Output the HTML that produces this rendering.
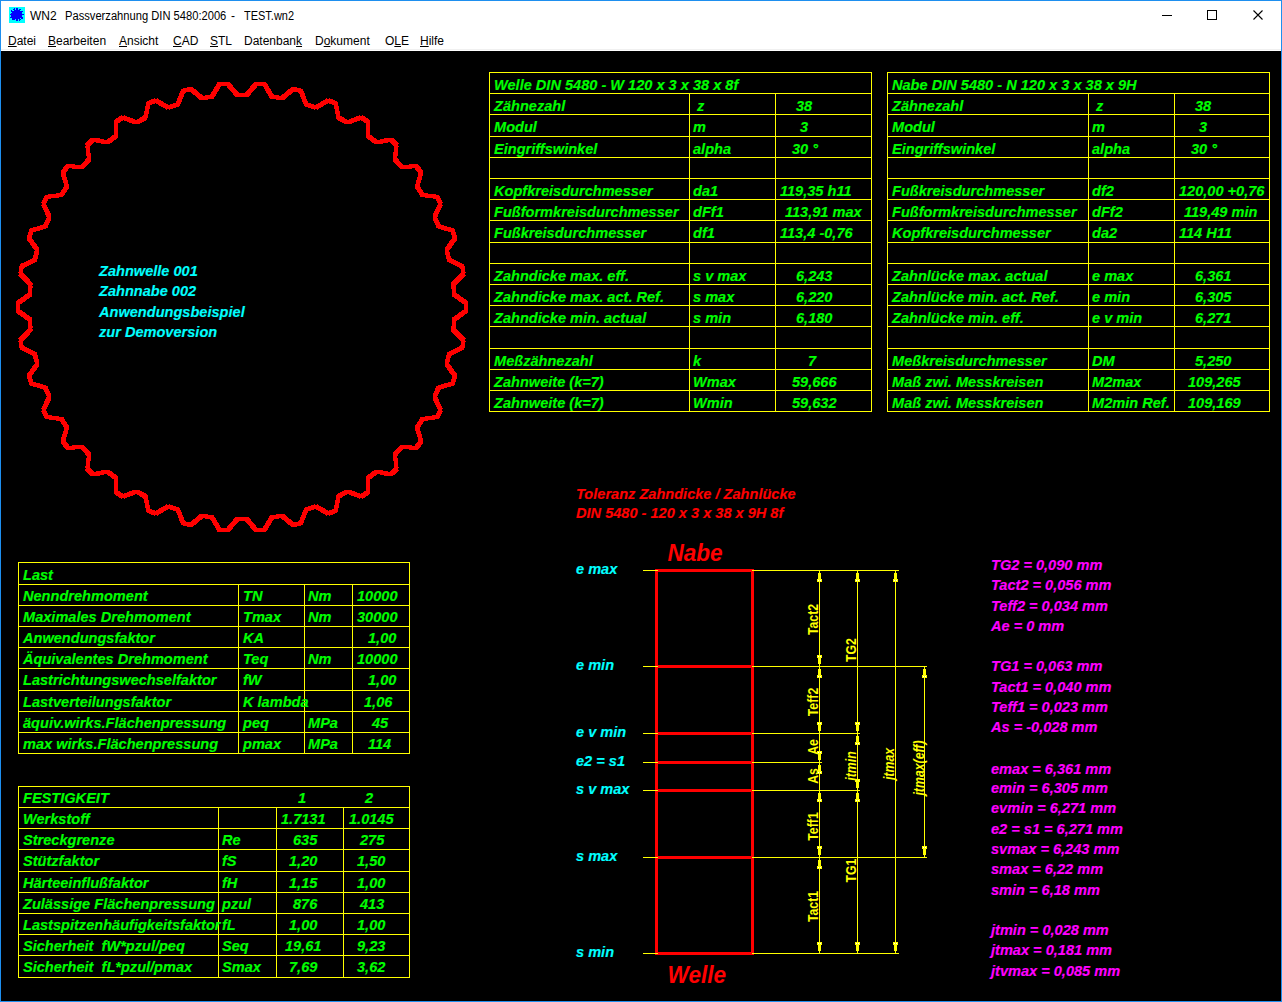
<!DOCTYPE html>
<html><head><meta charset="utf-8">
<style>
html,body{margin:0;padding:0;background:#000;}
body{width:1282px;height:1002px;overflow:hidden;position:relative;font-family:"Liberation Sans",sans-serif;}
#top{position:absolute;left:0;top:0;width:1282px;height:51px;background:#fff;}
#sep{position:absolute;left:0;top:49px;width:1282px;height:1px;background:#f0f0f0;}
.tt{position:absolute;top:9px;font-size:12px;line-height:14px;color:#000;white-space:pre;}
.mi{position:absolute;top:34px;font-size:12px;line-height:14px;color:#000;white-space:pre;}
.mi u{text-decoration:underline;text-underline-offset:1px;}
#cv{position:absolute;left:0;top:0;}
#cv text{font-family:"Liberation Sans",sans-serif;white-space:pre;}
.t{stroke-width:0.15px;font-size:15.5px;font-weight:bold;font-style:italic;}
.big{stroke-width:0px;font-size:24px;font-weight:bold;font-style:italic;}
.rot{font-size:15px;font-weight:bold;}
.it{font-style:italic;}
#border{position:absolute;left:0;top:0;width:1280px;height:1000px;border:1px solid #1e8fef;pointer-events:none;}
</style></head><body>
<div id="top"></div><div id="sep"></div>
<svg id="cv" width="1282" height="1002" viewBox="0 0 1282 1002" shape-rendering="crispEdges">
<rect x="489" y="72" width="383" height="1" fill="#ffff00"/>
<rect x="489" y="93" width="383" height="1" fill="#ffff00"/>
<rect x="489" y="114" width="383" height="1" fill="#ffff00"/>
<rect x="489" y="136" width="383" height="1" fill="#ffff00"/>
<rect x="489" y="157" width="383" height="1" fill="#ffff00"/>
<rect x="489" y="178" width="383" height="1" fill="#ffff00"/>
<rect x="489" y="199" width="383" height="1" fill="#ffff00"/>
<rect x="489" y="220" width="383" height="1" fill="#ffff00"/>
<rect x="489" y="242" width="383" height="1" fill="#ffff00"/>
<rect x="489" y="263" width="383" height="1" fill="#ffff00"/>
<rect x="489" y="284" width="383" height="1" fill="#ffff00"/>
<rect x="489" y="305" width="383" height="1" fill="#ffff00"/>
<rect x="489" y="326" width="383" height="1" fill="#ffff00"/>
<rect x="489" y="348" width="383" height="1" fill="#ffff00"/>
<rect x="489" y="369" width="383" height="1" fill="#ffff00"/>
<rect x="489" y="390" width="383" height="1" fill="#ffff00"/>
<rect x="489" y="411" width="383" height="1" fill="#ffff00"/>
<rect x="489" y="72" width="1" height="340" fill="#ffff00"/>
<rect x="871" y="72" width="1" height="340" fill="#ffff00"/>
<rect x="689" y="93" width="1" height="319" fill="#ffff00"/>
<rect x="775" y="93" width="1" height="319" fill="#ffff00"/>
<text class="t" fill="#00ff00" stroke="#00ff00" transform="translate(494,89.5) scale(0.941,1)">Welle DIN 5480 - W 120 x 3 x 38 x 8f</text>
<text class="t" fill="#00ff00" stroke="#00ff00" transform="translate(494,110.5) scale(0.941,1)">Zähnezahl</text>
<text class="t" fill="#00ff00" stroke="#00ff00" transform="translate(697,110.5) scale(0.941,1)">z</text>
<text class="t" fill="#00ff00" stroke="#00ff00" transform="translate(796,110.5) scale(0.941,1)">38</text>
<text class="t" fill="#00ff00" stroke="#00ff00" transform="translate(494,131.5) scale(0.941,1)">Modul</text>
<text class="t" fill="#00ff00" stroke="#00ff00" transform="translate(693,131.5) scale(0.941,1)">m</text>
<text class="t" fill="#00ff00" stroke="#00ff00" transform="translate(800,131.5) scale(0.941,1)">3</text>
<text class="t" fill="#00ff00" stroke="#00ff00" transform="translate(494,153.5) scale(0.941,1)">Eingriffswinkel</text>
<text class="t" fill="#00ff00" stroke="#00ff00" transform="translate(693,153.5) scale(0.941,1)">alpha</text>
<text class="t" fill="#00ff00" stroke="#00ff00" transform="translate(792,153.5) scale(0.941,1)">30 °</text>
<text class="t" fill="#00ff00" stroke="#00ff00" transform="translate(494,195.5) scale(0.941,1)">Kopfkreisdurchmesser</text>
<text class="t" fill="#00ff00" stroke="#00ff00" transform="translate(693,195.5) scale(0.941,1)">da1</text>
<text class="t" fill="#00ff00" stroke="#00ff00" transform="translate(780,195.5) scale(0.941,1)">119,35 h11</text>
<text class="t" fill="#00ff00" stroke="#00ff00" transform="translate(494,216.5) scale(0.941,1)">Fußformkreisdurchmesser</text>
<text class="t" fill="#00ff00" stroke="#00ff00" transform="translate(693,216.5) scale(0.941,1)">dFf1</text>
<text class="t" fill="#00ff00" stroke="#00ff00" transform="translate(785,216.5) scale(0.941,1)">113,91 max</text>
<text class="t" fill="#00ff00" stroke="#00ff00" transform="translate(494,237.5) scale(0.941,1)">Fußkreisdurchmesser</text>
<text class="t" fill="#00ff00" stroke="#00ff00" transform="translate(693,237.5) scale(0.941,1)">df1</text>
<text class="t" fill="#00ff00" stroke="#00ff00" transform="translate(780,237.5) scale(0.941,1)">113,4 -0,76</text>
<text class="t" fill="#00ff00" stroke="#00ff00" transform="translate(494,280.5) scale(0.941,1)">Zahndicke max. eff.</text>
<text class="t" fill="#00ff00" stroke="#00ff00" transform="translate(693,280.5) scale(0.941,1)">s v max</text>
<text class="t" fill="#00ff00" stroke="#00ff00" transform="translate(796,280.5) scale(0.941,1)">6,243</text>
<text class="t" fill="#00ff00" stroke="#00ff00" transform="translate(494,301.5) scale(0.941,1)">Zahndicke max. act. Ref.</text>
<text class="t" fill="#00ff00" stroke="#00ff00" transform="translate(693,301.5) scale(0.941,1)">s max</text>
<text class="t" fill="#00ff00" stroke="#00ff00" transform="translate(796,301.5) scale(0.941,1)">6,220</text>
<text class="t" fill="#00ff00" stroke="#00ff00" transform="translate(494,322.5) scale(0.941,1)">Zahndicke min. actual</text>
<text class="t" fill="#00ff00" stroke="#00ff00" transform="translate(693,322.5) scale(0.941,1)">s min</text>
<text class="t" fill="#00ff00" stroke="#00ff00" transform="translate(796,322.5) scale(0.941,1)">6,180</text>
<text class="t" fill="#00ff00" stroke="#00ff00" transform="translate(494,365.5) scale(0.941,1)">Meßzähnezahl</text>
<text class="t" fill="#00ff00" stroke="#00ff00" transform="translate(693,365.5) scale(0.941,1)">k</text>
<text class="t" fill="#00ff00" stroke="#00ff00" transform="translate(808,365.5) scale(0.941,1)">7</text>
<text class="t" fill="#00ff00" stroke="#00ff00" transform="translate(494,386.5) scale(0.941,1)">Zahnweite (k=7)</text>
<text class="t" fill="#00ff00" stroke="#00ff00" transform="translate(693,386.5) scale(0.941,1)">Wmax</text>
<text class="t" fill="#00ff00" stroke="#00ff00" transform="translate(792,386.5) scale(0.941,1)">59,666</text>
<text class="t" fill="#00ff00" stroke="#00ff00" transform="translate(494,407.5) scale(0.941,1)">Zahnweite (k=7)</text>
<text class="t" fill="#00ff00" stroke="#00ff00" transform="translate(693,407.5) scale(0.941,1)">Wmin</text>
<text class="t" fill="#00ff00" stroke="#00ff00" transform="translate(792,407.5) scale(0.941,1)">59,632</text>
<rect x="887" y="72" width="383" height="1" fill="#ffff00"/>
<rect x="887" y="93" width="383" height="1" fill="#ffff00"/>
<rect x="887" y="114" width="383" height="1" fill="#ffff00"/>
<rect x="887" y="136" width="383" height="1" fill="#ffff00"/>
<rect x="887" y="157" width="383" height="1" fill="#ffff00"/>
<rect x="887" y="178" width="383" height="1" fill="#ffff00"/>
<rect x="887" y="199" width="383" height="1" fill="#ffff00"/>
<rect x="887" y="220" width="383" height="1" fill="#ffff00"/>
<rect x="887" y="242" width="383" height="1" fill="#ffff00"/>
<rect x="887" y="263" width="383" height="1" fill="#ffff00"/>
<rect x="887" y="284" width="383" height="1" fill="#ffff00"/>
<rect x="887" y="305" width="383" height="1" fill="#ffff00"/>
<rect x="887" y="326" width="383" height="1" fill="#ffff00"/>
<rect x="887" y="348" width="383" height="1" fill="#ffff00"/>
<rect x="887" y="369" width="383" height="1" fill="#ffff00"/>
<rect x="887" y="390" width="383" height="1" fill="#ffff00"/>
<rect x="887" y="411" width="383" height="1" fill="#ffff00"/>
<rect x="887" y="72" width="1" height="340" fill="#ffff00"/>
<rect x="1269" y="72" width="1" height="340" fill="#ffff00"/>
<rect x="1088" y="93" width="1" height="319" fill="#ffff00"/>
<rect x="1174" y="93" width="1" height="319" fill="#ffff00"/>
<text class="t" fill="#00ff00" stroke="#00ff00" transform="translate(892,89.5) scale(0.941,1)">Nabe DIN 5480 - N 120 x 3 x 38 x 9H</text>
<text class="t" fill="#00ff00" stroke="#00ff00" transform="translate(892,110.5) scale(0.941,1)">Zähnezahl</text>
<text class="t" fill="#00ff00" stroke="#00ff00" transform="translate(1096,110.5) scale(0.941,1)">z</text>
<text class="t" fill="#00ff00" stroke="#00ff00" transform="translate(1195,110.5) scale(0.941,1)">38</text>
<text class="t" fill="#00ff00" stroke="#00ff00" transform="translate(892,131.5) scale(0.941,1)">Modul</text>
<text class="t" fill="#00ff00" stroke="#00ff00" transform="translate(1092,131.5) scale(0.941,1)">m</text>
<text class="t" fill="#00ff00" stroke="#00ff00" transform="translate(1199,131.5) scale(0.941,1)">3</text>
<text class="t" fill="#00ff00" stroke="#00ff00" transform="translate(892,153.5) scale(0.941,1)">Eingriffswinkel</text>
<text class="t" fill="#00ff00" stroke="#00ff00" transform="translate(1092,153.5) scale(0.941,1)">alpha</text>
<text class="t" fill="#00ff00" stroke="#00ff00" transform="translate(1191,153.5) scale(0.941,1)">30 °</text>
<text class="t" fill="#00ff00" stroke="#00ff00" transform="translate(892,195.5) scale(0.941,1)">Fußkreisdurchmesser</text>
<text class="t" fill="#00ff00" stroke="#00ff00" transform="translate(1092,195.5) scale(0.941,1)">df2</text>
<text class="t" fill="#00ff00" stroke="#00ff00" transform="translate(1179,195.5) scale(0.941,1)">120,00 +0,76</text>
<text class="t" fill="#00ff00" stroke="#00ff00" transform="translate(892,216.5) scale(0.941,1)">Fußformkreisdurchmesser</text>
<text class="t" fill="#00ff00" stroke="#00ff00" transform="translate(1092,216.5) scale(0.941,1)">dFf2</text>
<text class="t" fill="#00ff00" stroke="#00ff00" transform="translate(1184,216.5) scale(0.941,1)">119,49 min</text>
<text class="t" fill="#00ff00" stroke="#00ff00" transform="translate(892,237.5) scale(0.941,1)">Kopfkreisdurchmesser</text>
<text class="t" fill="#00ff00" stroke="#00ff00" transform="translate(1092,237.5) scale(0.941,1)">da2</text>
<text class="t" fill="#00ff00" stroke="#00ff00" transform="translate(1179,237.5) scale(0.941,1)">114 H11</text>
<text class="t" fill="#00ff00" stroke="#00ff00" transform="translate(892,280.5) scale(0.941,1)">Zahnlücke max. actual</text>
<text class="t" fill="#00ff00" stroke="#00ff00" transform="translate(1092,280.5) scale(0.941,1)">e max</text>
<text class="t" fill="#00ff00" stroke="#00ff00" transform="translate(1195,280.5) scale(0.941,1)">6,361</text>
<text class="t" fill="#00ff00" stroke="#00ff00" transform="translate(892,301.5) scale(0.941,1)">Zahnlücke min. act. Ref.</text>
<text class="t" fill="#00ff00" stroke="#00ff00" transform="translate(1092,301.5) scale(0.941,1)">e min</text>
<text class="t" fill="#00ff00" stroke="#00ff00" transform="translate(1195,301.5) scale(0.941,1)">6,305</text>
<text class="t" fill="#00ff00" stroke="#00ff00" transform="translate(892,322.5) scale(0.941,1)">Zahnlücke min. eff.</text>
<text class="t" fill="#00ff00" stroke="#00ff00" transform="translate(1092,322.5) scale(0.941,1)">e v min</text>
<text class="t" fill="#00ff00" stroke="#00ff00" transform="translate(1195,322.5) scale(0.941,1)">6,271</text>
<text class="t" fill="#00ff00" stroke="#00ff00" transform="translate(892,365.5) scale(0.941,1)">Meßkreisdurchmesser</text>
<text class="t" fill="#00ff00" stroke="#00ff00" transform="translate(1092,365.5) scale(0.941,1)">DM</text>
<text class="t" fill="#00ff00" stroke="#00ff00" transform="translate(1195,365.5) scale(0.941,1)">5,250</text>
<text class="t" fill="#00ff00" stroke="#00ff00" transform="translate(892,386.5) scale(0.941,1)">Maß zwi. Messkreisen</text>
<text class="t" fill="#00ff00" stroke="#00ff00" transform="translate(1092,386.5) scale(0.941,1)">M2max</text>
<text class="t" fill="#00ff00" stroke="#00ff00" transform="translate(1188,386.5) scale(0.941,1)">109,265</text>
<text class="t" fill="#00ff00" stroke="#00ff00" transform="translate(892,407.5) scale(0.941,1)">Maß zwi. Messkreisen</text>
<text class="t" fill="#00ff00" stroke="#00ff00" transform="translate(1092,407.5) scale(0.941,1)">M2min Ref.</text>
<text class="t" fill="#00ff00" stroke="#00ff00" transform="translate(1188,407.5) scale(0.941,1)">109,169</text>
<rect x="18" y="562" width="392" height="1" fill="#ffff00"/>
<rect x="18" y="584" width="392" height="1" fill="#ffff00"/>
<rect x="18" y="605" width="392" height="1" fill="#ffff00"/>
<rect x="18" y="626" width="392" height="1" fill="#ffff00"/>
<rect x="18" y="647" width="392" height="1" fill="#ffff00"/>
<rect x="18" y="668" width="392" height="1" fill="#ffff00"/>
<rect x="18" y="690" width="392" height="1" fill="#ffff00"/>
<rect x="18" y="711" width="392" height="1" fill="#ffff00"/>
<rect x="18" y="732" width="392" height="1" fill="#ffff00"/>
<rect x="18" y="753" width="392" height="1" fill="#ffff00"/>
<rect x="18" y="562" width="1" height="192" fill="#ffff00"/>
<rect x="409" y="562" width="1" height="192" fill="#ffff00"/>
<rect x="238" y="584" width="1" height="170" fill="#ffff00"/>
<rect x="304" y="584" width="1" height="170" fill="#ffff00"/>
<rect x="352" y="584" width="1" height="170" fill="#ffff00"/>
<text class="t" fill="#00ff00" stroke="#00ff00" transform="translate(23,580) scale(0.941,1)">Last</text>
<text class="t" fill="#00ff00" stroke="#00ff00" transform="translate(23,601) scale(0.941,1)">Nenndrehmoment</text>
<text class="t" fill="#00ff00" stroke="#00ff00" transform="translate(243,601) scale(0.941,1)">TN</text>
<text class="t" fill="#00ff00" stroke="#00ff00" transform="translate(308,601) scale(0.941,1)">Nm</text>
<text class="t" fill="#00ff00" stroke="#00ff00" transform="translate(357,601) scale(0.941,1)">10000</text>
<text class="t" fill="#00ff00" stroke="#00ff00" transform="translate(23,622) scale(0.941,1)">Maximales Drehmoment</text>
<text class="t" fill="#00ff00" stroke="#00ff00" transform="translate(243,622) scale(0.941,1)">Tmax</text>
<text class="t" fill="#00ff00" stroke="#00ff00" transform="translate(308,622) scale(0.941,1)">Nm</text>
<text class="t" fill="#00ff00" stroke="#00ff00" transform="translate(357,622) scale(0.941,1)">30000</text>
<text class="t" fill="#00ff00" stroke="#00ff00" transform="translate(23,643) scale(0.941,1)">Anwendungsfaktor</text>
<text class="t" fill="#00ff00" stroke="#00ff00" transform="translate(243,643) scale(0.941,1)">KA</text>
<text class="t" fill="#00ff00" stroke="#00ff00" transform="translate(368,643) scale(0.941,1)">1,00</text>
<text class="t" fill="#00ff00" stroke="#00ff00" transform="translate(23,664) scale(0.941,1)">Äquivalentes Drehmoment</text>
<text class="t" fill="#00ff00" stroke="#00ff00" transform="translate(243,664) scale(0.941,1)">Teq</text>
<text class="t" fill="#00ff00" stroke="#00ff00" transform="translate(308,664) scale(0.941,1)">Nm</text>
<text class="t" fill="#00ff00" stroke="#00ff00" transform="translate(357,664) scale(0.941,1)">10000</text>
<text class="t" fill="#00ff00" stroke="#00ff00" transform="translate(23,685) scale(0.941,1)">Lastrichtungswechselfaktor</text>
<text class="t" fill="#00ff00" stroke="#00ff00" transform="translate(243,685) scale(0.941,1)">fW</text>
<text class="t" fill="#00ff00" stroke="#00ff00" transform="translate(368,685) scale(0.941,1)">1,00</text>
<text class="t" fill="#00ff00" stroke="#00ff00" transform="translate(23,707) scale(0.941,1)">Lastverteilungsfaktor</text>
<text class="t" fill="#00ff00" stroke="#00ff00" transform="translate(243,707) scale(0.941,1)">K lambda</text>
<text class="t" fill="#00ff00" stroke="#00ff00" transform="translate(364,707) scale(0.941,1)">1,06</text>
<text class="t" fill="#00ff00" stroke="#00ff00" transform="translate(23,728) scale(0.941,1)">äquiv.wirks.Flächenpressung</text>
<text class="t" fill="#00ff00" stroke="#00ff00" transform="translate(243,728) scale(0.941,1)">peq</text>
<text class="t" fill="#00ff00" stroke="#00ff00" transform="translate(308,728) scale(0.941,1)">MPa</text>
<text class="t" fill="#00ff00" stroke="#00ff00" transform="translate(372,728) scale(0.941,1)">45</text>
<text class="t" fill="#00ff00" stroke="#00ff00" transform="translate(23,749) scale(0.941,1)">max wirks.Flächenpressung</text>
<text class="t" fill="#00ff00" stroke="#00ff00" transform="translate(243,749) scale(0.941,1)">pmax</text>
<text class="t" fill="#00ff00" stroke="#00ff00" transform="translate(308,749) scale(0.941,1)">MPa</text>
<text class="t" fill="#00ff00" stroke="#00ff00" transform="translate(368,749) scale(0.941,1)">114</text>
<rect x="18" y="786" width="392" height="1" fill="#ffff00"/>
<rect x="18" y="807" width="392" height="1" fill="#ffff00"/>
<rect x="18" y="828" width="392" height="1" fill="#ffff00"/>
<rect x="18" y="849" width="392" height="1" fill="#ffff00"/>
<rect x="18" y="871" width="392" height="1" fill="#ffff00"/>
<rect x="18" y="892" width="392" height="1" fill="#ffff00"/>
<rect x="18" y="913" width="392" height="1" fill="#ffff00"/>
<rect x="18" y="934" width="392" height="1" fill="#ffff00"/>
<rect x="18" y="955" width="392" height="1" fill="#ffff00"/>
<rect x="18" y="977" width="392" height="1" fill="#ffff00"/>
<rect x="18" y="786" width="1" height="192" fill="#ffff00"/>
<rect x="409" y="786" width="1" height="192" fill="#ffff00"/>
<rect x="218" y="807" width="1" height="171" fill="#ffff00"/>
<rect x="276" y="807" width="1" height="171" fill="#ffff00"/>
<rect x="343" y="807" width="1" height="171" fill="#ffff00"/>
<text class="t" fill="#00ff00" stroke="#00ff00" transform="translate(23,803) scale(0.941,1)">FESTIGKEIT</text>
<text class="t" fill="#00ff00" stroke="#00ff00" transform="translate(298,803) scale(0.941,1)">1</text>
<text class="t" fill="#00ff00" stroke="#00ff00" transform="translate(365,803) scale(0.941,1)">2</text>
<text class="t" fill="#00ff00" stroke="#00ff00" transform="translate(23,824) scale(0.941,1)">Werkstoff</text>
<text class="t" fill="#00ff00" stroke="#00ff00" transform="translate(281,824) scale(0.941,1)">1.7131</text>
<text class="t" fill="#00ff00" stroke="#00ff00" transform="translate(349,824) scale(0.941,1)">1.0145</text>
<text class="t" fill="#00ff00" stroke="#00ff00" transform="translate(23,845) scale(0.941,1)">Streckgrenze</text>
<text class="t" fill="#00ff00" stroke="#00ff00" transform="translate(222,845) scale(0.941,1)">Re</text>
<text class="t" fill="#00ff00" stroke="#00ff00" transform="translate(293,845) scale(0.941,1)">635</text>
<text class="t" fill="#00ff00" stroke="#00ff00" transform="translate(360,845) scale(0.941,1)">275</text>
<text class="t" fill="#00ff00" stroke="#00ff00" transform="translate(23,866) scale(0.941,1)">Stützfaktor</text>
<text class="t" fill="#00ff00" stroke="#00ff00" transform="translate(222,866) scale(0.941,1)">fS</text>
<text class="t" fill="#00ff00" stroke="#00ff00" transform="translate(289,866) scale(0.941,1)">1,20</text>
<text class="t" fill="#00ff00" stroke="#00ff00" transform="translate(357,866) scale(0.941,1)">1,50</text>
<text class="t" fill="#00ff00" stroke="#00ff00" transform="translate(23,888) scale(0.941,1)">Härteeinflußfaktor</text>
<text class="t" fill="#00ff00" stroke="#00ff00" transform="translate(222,888) scale(0.941,1)">fH</text>
<text class="t" fill="#00ff00" stroke="#00ff00" transform="translate(289,888) scale(0.941,1)">1,15</text>
<text class="t" fill="#00ff00" stroke="#00ff00" transform="translate(357,888) scale(0.941,1)">1,00</text>
<text class="t" fill="#00ff00" stroke="#00ff00" transform="translate(23,909) scale(0.941,1)">Zulässige Flächenpressung</text>
<text class="t" fill="#00ff00" stroke="#00ff00" transform="translate(222,909) scale(0.941,1)">pzul</text>
<text class="t" fill="#00ff00" stroke="#00ff00" transform="translate(293,909) scale(0.941,1)">876</text>
<text class="t" fill="#00ff00" stroke="#00ff00" transform="translate(360,909) scale(0.941,1)">413</text>
<text class="t" fill="#00ff00" stroke="#00ff00" transform="translate(23,930) scale(0.941,1)">Lastspitzenhäufigkeitsfaktor</text>
<text class="t" fill="#00ff00" stroke="#00ff00" transform="translate(222,930) scale(0.941,1)">fL</text>
<text class="t" fill="#00ff00" stroke="#00ff00" transform="translate(289,930) scale(0.941,1)">1,00</text>
<text class="t" fill="#00ff00" stroke="#00ff00" transform="translate(357,930) scale(0.941,1)">1,00</text>
<text class="t" fill="#00ff00" stroke="#00ff00" transform="translate(23,951) scale(0.941,1)">Sicherheit  fW*pzul/peq</text>
<text class="t" fill="#00ff00" stroke="#00ff00" transform="translate(222,951) scale(0.941,1)">Seq</text>
<text class="t" fill="#00ff00" stroke="#00ff00" transform="translate(285,951) scale(0.941,1)">19,61</text>
<text class="t" fill="#00ff00" stroke="#00ff00" transform="translate(357,951) scale(0.941,1)">9,23</text>
<text class="t" fill="#00ff00" stroke="#00ff00" transform="translate(23,972) scale(0.941,1)">Sicherheit  fL*pzul/pmax</text>
<text class="t" fill="#00ff00" stroke="#00ff00" transform="translate(222,972) scale(0.941,1)">Smax</text>
<text class="t" fill="#00ff00" stroke="#00ff00" transform="translate(289,972) scale(0.941,1)">7,69</text>
<text class="t" fill="#00ff00" stroke="#00ff00" transform="translate(357,972) scale(0.941,1)">3,62</text>
<defs><polygon id="gp" points="29.87,319.49 18.04,311.00 18.04,303.00 29.87,294.51 30.70,284.41 20.43,274.08 21.75,266.19 34.82,259.76 37.31,249.94 28.87,238.06 31.47,230.50 45.42,226.30 49.49,217.02 43.13,203.92 46.93,196.89 61.38,195.05 66.92,186.56 62.80,172.59 67.72,166.28 82.27,166.85 89.14,159.39 87.37,144.93 93.26,139.52 107.52,142.47 115.52,136.24 116.15,121.69 122.85,117.32 136.43,122.58 145.35,117.75 148.37,103.51 155.70,100.29 168.23,107.72 177.81,104.43 183.14,90.87 190.90,88.91 202.04,98.29 212.03,96.62 219.52,84.13 227.49,83.47 236.93,94.56 247.07,94.56 256.51,83.47 264.48,84.13 271.97,96.62 281.96,98.29 293.10,88.91 300.86,90.87 306.19,104.43 315.77,107.72 328.30,100.29 335.63,103.51 338.65,117.75 347.57,122.58 361.15,117.32 367.85,121.69 368.48,136.24 376.48,142.47 390.74,139.52 396.63,144.93 394.86,159.39 401.73,166.85 416.28,166.28 421.20,172.59 417.08,186.56 422.62,195.05 437.07,196.89 440.87,203.92 434.51,217.02 438.58,226.30 452.53,230.50 455.13,238.06 446.69,249.94 449.18,259.76 462.25,266.19 463.57,274.08 453.30,284.41 454.13,294.51 465.96,303.00 465.96,311.00 454.13,319.49 453.30,329.59 463.57,339.92 462.25,347.81 449.18,354.24 446.69,364.06 455.13,375.94 452.53,383.50 438.58,387.70 434.51,396.98 440.87,410.08 437.07,417.11 422.62,418.95 417.08,427.44 421.20,441.41 416.28,447.72 401.73,447.15 394.86,454.61 396.63,469.07 390.74,474.48 376.48,471.53 368.48,477.76 367.85,492.31 361.15,496.68 347.57,491.42 338.65,496.25 335.63,510.49 328.30,513.71 315.77,506.28 306.19,509.57 300.86,523.13 293.10,525.09 281.96,515.71 271.97,517.38 264.48,529.87 256.51,530.53 247.07,519.44 236.93,519.44 227.49,530.53 219.52,529.87 212.03,517.38 202.04,515.71 190.90,525.09 183.14,523.13 177.81,509.57 168.23,506.28 155.70,513.71 148.37,510.49 145.35,496.25 136.43,491.42 122.85,496.68 116.15,492.31 115.52,477.76 107.52,471.53 93.26,474.48 87.37,469.07 89.14,454.61 82.27,447.15 67.72,447.72 62.80,441.41 66.92,427.44 61.38,418.95 46.93,417.11 43.13,410.08 49.49,396.98 45.42,387.70 31.47,383.50 28.87,375.94 37.31,364.06 34.82,354.24 21.75,347.81 20.43,339.92 30.70,329.59" fill="none" stroke="#ff0000" stroke-linejoin="bevel" shape-rendering="crispEdges"/></defs>
<use href="#gp" stroke-width="3.5"/>
<use href="#gp" stroke-width="1" transform="translate(1.5,1.5)"/>
<use href="#gp" stroke-width="1" transform="translate(-1.5,1.5)"/>
<use href="#gp" stroke-width="1" transform="translate(1.5,-1.5)"/>
<use href="#gp" stroke-width="1" transform="translate(-1.5,-1.5)"/>
<text class="t" fill="#00ffff" stroke="#00ffff" transform="translate(99,276) scale(0.941,1)">Zahnwelle 001</text>
<text class="t" fill="#00ffff" stroke="#00ffff" transform="translate(99,296) scale(0.941,1)">Zahnnabe 002</text>
<text class="t" fill="#00ffff" stroke="#00ffff" transform="translate(99,317) scale(0.941,1)">Anwendungsbeispiel</text>
<text class="t" fill="#00ffff" stroke="#00ffff" transform="translate(99,337) scale(0.941,1)">zur Demoversion</text>
<text class="t" fill="#ff0000" stroke="#ff0000" transform="translate(576,499) scale(0.941,1)">Toleranz Zahndicke / Zahnlücke</text>
<text class="t" fill="#ff0000" stroke="#ff0000" transform="translate(576,518) scale(0.941,1)">DIN 5480 - 120 x 3 x 38 x 9H 8f</text>
<text class="big" fill="#ff0000" stroke="#ff0000" transform="translate(667.5,561) scale(0.94,1)">Nabe</text>
<text class="big" fill="#ff0000" stroke="#ff0000" transform="translate(667.5,983) scale(0.94,1)">Welle</text>
<text class="t" fill="#00ffff" stroke="#00ffff" transform="translate(576,574) scale(0.941,1)">e max</text>
<text class="t" fill="#00ffff" stroke="#00ffff" transform="translate(576,670) scale(0.941,1)">e min</text>
<text class="t" fill="#00ffff" stroke="#00ffff" transform="translate(576,737) scale(0.941,1)">e v min</text>
<text class="t" fill="#00ffff" stroke="#00ffff" transform="translate(576,766) scale(0.941,1)">e2 = s1</text>
<text class="t" fill="#00ffff" stroke="#00ffff" transform="translate(576,794) scale(0.941,1)">s v max</text>
<text class="t" fill="#00ffff" stroke="#00ffff" transform="translate(576,861) scale(0.941,1)">s max</text>
<text class="t" fill="#00ffff" stroke="#00ffff" transform="translate(576,957) scale(0.941,1)">s min</text>
<rect x="819" y="570" width="1" height="384" fill="#ffff00"/>
<rect x="857" y="570" width="1" height="384" fill="#ffff00"/>
<rect x="895" y="570" width="1" height="384" fill="#ffff00"/>
<rect x="924" y="666" width="1" height="192" fill="#ffff00"/>
<rect x="818" y="573" width="3" height="6" fill="#ffff00"/>
<rect x="817" y="579" width="5" height="3" fill="#ffff00"/>
<rect x="818" y="580" width="1" height="1" fill="#ffffff"/>
<rect x="820" y="580" width="1" height="1" fill="#ffffff"/>
<rect x="818" y="658" width="3" height="6" fill="#ffff00"/>
<rect x="817" y="655" width="5" height="3" fill="#ffff00"/>
<rect x="818" y="656" width="1" height="1" fill="#ffffff"/>
<rect x="820" y="656" width="1" height="1" fill="#ffffff"/>
<rect x="818" y="669" width="3" height="6" fill="#ffff00"/>
<rect x="817" y="675" width="5" height="3" fill="#ffff00"/>
<rect x="818" y="676" width="1" height="1" fill="#ffffff"/>
<rect x="820" y="676" width="1" height="1" fill="#ffffff"/>
<rect x="818" y="725" width="3" height="6" fill="#ffff00"/>
<rect x="817" y="722" width="5" height="3" fill="#ffff00"/>
<rect x="818" y="723" width="1" height="1" fill="#ffffff"/>
<rect x="820" y="723" width="1" height="1" fill="#ffffff"/>
<rect x="818" y="754" width="3" height="6" fill="#ffff00"/>
<rect x="817" y="751" width="5" height="3" fill="#ffff00"/>
<rect x="818" y="752" width="1" height="1" fill="#ffffff"/>
<rect x="820" y="752" width="1" height="1" fill="#ffffff"/>
<rect x="818" y="765" width="3" height="6" fill="#ffff00"/>
<rect x="817" y="771" width="5" height="3" fill="#ffff00"/>
<rect x="818" y="772" width="1" height="1" fill="#ffffff"/>
<rect x="820" y="772" width="1" height="1" fill="#ffffff"/>
<rect x="818" y="793" width="3" height="6" fill="#ffff00"/>
<rect x="817" y="799" width="5" height="3" fill="#ffff00"/>
<rect x="818" y="800" width="1" height="1" fill="#ffffff"/>
<rect x="820" y="800" width="1" height="1" fill="#ffffff"/>
<rect x="818" y="849" width="3" height="6" fill="#ffff00"/>
<rect x="817" y="846" width="5" height="3" fill="#ffff00"/>
<rect x="818" y="847" width="1" height="1" fill="#ffffff"/>
<rect x="820" y="847" width="1" height="1" fill="#ffffff"/>
<rect x="818" y="860" width="3" height="6" fill="#ffff00"/>
<rect x="817" y="866" width="5" height="3" fill="#ffff00"/>
<rect x="818" y="867" width="1" height="1" fill="#ffffff"/>
<rect x="820" y="867" width="1" height="1" fill="#ffffff"/>
<rect x="818" y="945" width="3" height="6" fill="#ffff00"/>
<rect x="817" y="942" width="5" height="3" fill="#ffff00"/>
<rect x="818" y="943" width="1" height="1" fill="#ffffff"/>
<rect x="820" y="943" width="1" height="1" fill="#ffffff"/>
<rect x="856" y="573" width="3" height="6" fill="#ffff00"/>
<rect x="855" y="579" width="5" height="3" fill="#ffff00"/>
<rect x="856" y="580" width="1" height="1" fill="#ffffff"/>
<rect x="858" y="580" width="1" height="1" fill="#ffffff"/>
<rect x="856" y="725" width="3" height="6" fill="#ffff00"/>
<rect x="855" y="722" width="5" height="3" fill="#ffff00"/>
<rect x="856" y="723" width="1" height="1" fill="#ffffff"/>
<rect x="858" y="723" width="1" height="1" fill="#ffffff"/>
<rect x="856" y="736" width="3" height="6" fill="#ffff00"/>
<rect x="855" y="742" width="5" height="3" fill="#ffff00"/>
<rect x="856" y="743" width="1" height="1" fill="#ffffff"/>
<rect x="858" y="743" width="1" height="1" fill="#ffffff"/>
<rect x="856" y="782" width="3" height="6" fill="#ffff00"/>
<rect x="855" y="779" width="5" height="3" fill="#ffff00"/>
<rect x="856" y="780" width="1" height="1" fill="#ffffff"/>
<rect x="858" y="780" width="1" height="1" fill="#ffffff"/>
<rect x="856" y="793" width="3" height="6" fill="#ffff00"/>
<rect x="855" y="799" width="5" height="3" fill="#ffff00"/>
<rect x="856" y="800" width="1" height="1" fill="#ffffff"/>
<rect x="858" y="800" width="1" height="1" fill="#ffffff"/>
<rect x="856" y="945" width="3" height="6" fill="#ffff00"/>
<rect x="855" y="942" width="5" height="3" fill="#ffff00"/>
<rect x="856" y="943" width="1" height="1" fill="#ffffff"/>
<rect x="858" y="943" width="1" height="1" fill="#ffffff"/>
<rect x="894" y="573" width="3" height="6" fill="#ffff00"/>
<rect x="893" y="579" width="5" height="3" fill="#ffff00"/>
<rect x="894" y="580" width="1" height="1" fill="#ffffff"/>
<rect x="896" y="580" width="1" height="1" fill="#ffffff"/>
<rect x="894" y="945" width="3" height="6" fill="#ffff00"/>
<rect x="893" y="942" width="5" height="3" fill="#ffff00"/>
<rect x="894" y="943" width="1" height="1" fill="#ffffff"/>
<rect x="896" y="943" width="1" height="1" fill="#ffffff"/>
<rect x="923" y="669" width="3" height="6" fill="#ffff00"/>
<rect x="922" y="675" width="5" height="3" fill="#ffff00"/>
<rect x="923" y="676" width="1" height="1" fill="#ffffff"/>
<rect x="925" y="676" width="1" height="1" fill="#ffffff"/>
<rect x="923" y="849" width="3" height="6" fill="#ffff00"/>
<rect x="922" y="846" width="5" height="3" fill="#ffff00"/>
<rect x="923" y="847" width="1" height="1" fill="#ffffff"/>
<rect x="925" y="847" width="1" height="1" fill="#ffffff"/>
<rect x="655" y="569" width="3" height="386" fill="#ff0000"/>
<rect x="751" y="569" width="3" height="386" fill="#ff0000"/>
<rect x="655" y="569" width="99" height="3" fill="#ff0000"/>
<rect x="655" y="665" width="99" height="3" fill="#ff0000"/>
<rect x="655" y="732" width="99" height="3" fill="#ff0000"/>
<rect x="655" y="761" width="99" height="3" fill="#ff0000"/>
<rect x="655" y="789" width="99" height="3" fill="#ff0000"/>
<rect x="655" y="856" width="99" height="3" fill="#ff0000"/>
<rect x="655" y="952" width="99" height="3" fill="#ff0000"/>
<rect x="643" y="570" width="15" height="1" fill="#ffff00"/>
<rect x="752" y="570" width="147" height="1" fill="#ffff00"/>
<rect x="643" y="666" width="15" height="1" fill="#ffff00"/>
<rect x="752" y="666" width="175" height="1" fill="#ffff00"/>
<rect x="643" y="733" width="15" height="1" fill="#ffff00"/>
<rect x="752" y="733" width="108" height="1" fill="#ffff00"/>
<rect x="643" y="762" width="15" height="1" fill="#ffff00"/>
<rect x="752" y="762" width="70" height="1" fill="#ffff00"/>
<rect x="643" y="790" width="15" height="1" fill="#ffff00"/>
<rect x="752" y="790" width="108" height="1" fill="#ffff00"/>
<rect x="643" y="857" width="15" height="1" fill="#ffff00"/>
<rect x="752" y="857" width="175" height="1" fill="#ffff00"/>
<rect x="643" y="953" width="15" height="1" fill="#ffff00"/>
<rect x="752" y="953" width="147" height="1" fill="#ffff00"/>
<text class="rot" fill="#ffff00" text-anchor="middle" transform="translate(818,619.5) rotate(-90) scale(0.82,1)">Tact2</text>
<text class="rot" fill="#ffff00" text-anchor="middle" transform="translate(856,650) rotate(-90) scale(0.82,1)">TG2</text>
<text class="rot" fill="#ffff00" text-anchor="middle" transform="translate(818,702) rotate(-90) scale(0.82,1)">Teff2</text>
<text class="rot" fill="#ffff00" text-anchor="middle" transform="translate(818,747) rotate(-90) scale(0.82,1)">Ae</text>
<text class="rot" fill="#ffff00" text-anchor="middle" transform="translate(818,776) rotate(-90) scale(0.82,1)">As</text>
<text class="rot it" fill="#ffff00" text-anchor="middle" transform="translate(856,766) rotate(-90) scale(0.82,1)">jtmin</text>
<text class="rot it" fill="#ffff00" text-anchor="middle" transform="translate(894,764) rotate(-90) scale(0.82,1)">jtmax</text>
<text class="rot it" fill="#ffff00" text-anchor="middle" transform="translate(924,768) rotate(-90) scale(0.82,1)">jtmax(eff)</text>
<text class="rot" fill="#ffff00" text-anchor="middle" transform="translate(818,826.5) rotate(-90) scale(0.82,1)">Teff1</text>
<text class="rot" fill="#ffff00" text-anchor="middle" transform="translate(856,870.5) rotate(-90) scale(0.82,1)">TG1</text>
<text class="rot" fill="#ffff00" text-anchor="middle" transform="translate(818,906.5) rotate(-90) scale(0.82,1)">Tact1</text>
<text class="t" fill="#ff00ff" stroke="#ff00ff" transform="translate(991,570) scale(0.941,1)">TG2 = 0,090 mm</text>
<text class="t" fill="#ff00ff" stroke="#ff00ff" transform="translate(991,590) scale(0.941,1)">Tact2 = 0,056 mm</text>
<text class="t" fill="#ff00ff" stroke="#ff00ff" transform="translate(991,611) scale(0.941,1)">Teff2 = 0,034 mm</text>
<text class="t" fill="#ff00ff" stroke="#ff00ff" transform="translate(991,631) scale(0.941,1)">Ae = 0 mm</text>
<text class="t" fill="#ff00ff" stroke="#ff00ff" transform="translate(991,671) scale(0.941,1)">TG1 = 0,063 mm</text>
<text class="t" fill="#ff00ff" stroke="#ff00ff" transform="translate(991,692) scale(0.941,1)">Tact1 = 0,040 mm</text>
<text class="t" fill="#ff00ff" stroke="#ff00ff" transform="translate(991,712) scale(0.941,1)">Teff1 = 0,023 mm</text>
<text class="t" fill="#ff00ff" stroke="#ff00ff" transform="translate(991,732) scale(0.941,1)">As = -0,028 mm</text>
<text class="t" fill="#ff00ff" stroke="#ff00ff" transform="translate(991,774) scale(0.941,1)">emax = 6,361 mm</text>
<text class="t" fill="#ff00ff" stroke="#ff00ff" transform="translate(991,793) scale(0.941,1)">emin = 6,305 mm</text>
<text class="t" fill="#ff00ff" stroke="#ff00ff" transform="translate(991,813) scale(0.941,1)">evmin = 6,271 mm</text>
<text class="t" fill="#ff00ff" stroke="#ff00ff" transform="translate(991,834) scale(0.941,1)">e2 = s1 = 6,271 mm</text>
<text class="t" fill="#ff00ff" stroke="#ff00ff" transform="translate(991,854) scale(0.941,1)">svmax = 6,243 mm</text>
<text class="t" fill="#ff00ff" stroke="#ff00ff" transform="translate(991,874) scale(0.941,1)">smax = 6,22 mm</text>
<text class="t" fill="#ff00ff" stroke="#ff00ff" transform="translate(991,895) scale(0.941,1)">smin = 6,18 mm</text>
<text class="t" fill="#ff00ff" stroke="#ff00ff" transform="translate(991,935) scale(0.941,1)">jtmin = 0,028 mm</text>
<text class="t" fill="#ff00ff" stroke="#ff00ff" transform="translate(991,955) scale(0.941,1)">jtmax = 0,181 mm</text>
<text class="t" fill="#ff00ff" stroke="#ff00ff" transform="translate(991,976) scale(0.941,1)">jtvmax = 0,085 mm</text>
</svg>
<div id="icon" style="position:absolute;left:9px;top:7px;width:16px;height:16px;background:#00ffff;"></div>
<svg style="position:absolute;left:9px;top:7px" width="16" height="16" viewBox="0 0 16 16" shape-rendering="crispEdges"><g fill="#0000ff"><rect x="5" y="1" width="1" height="1"/><rect x="7" y="1" width="1" height="1"/><rect x="8" y="1" width="1" height="1"/><rect x="4" y="2" width="1" height="1"/><rect x="5" y="2" width="1" height="1"/><rect x="7" y="2" width="1" height="1"/><rect x="8" y="2" width="1" height="1"/><rect x="10" y="2" width="1" height="1"/><rect x="11" y="2" width="1" height="1"/><rect x="2" y="3" width="1" height="1"/><rect x="5" y="3" width="1" height="1"/><rect x="6" y="3" width="1" height="1"/><rect x="7" y="3" width="1" height="1"/><rect x="8" y="3" width="1" height="1"/><rect x="9" y="3" width="1" height="1"/><rect x="10" y="3" width="1" height="1"/><rect x="2" y="4" width="1" height="1"/><rect x="3" y="4" width="1" height="1"/><rect x="4" y="4" width="1" height="1"/><rect x="5" y="4" width="1" height="1"/><rect x="6" y="4" width="1" height="1"/><rect x="7" y="4" width="1" height="1"/><rect x="8" y="4" width="1" height="1"/><rect x="9" y="4" width="1" height="1"/><rect x="10" y="4" width="1" height="1"/><rect x="11" y="4" width="1" height="1"/><rect x="12" y="4" width="1" height="1"/><rect x="13" y="4" width="1" height="1"/><rect x="3" y="5" width="1" height="1"/><rect x="4" y="5" width="1" height="1"/><rect x="5" y="5" width="1" height="1"/><rect x="6" y="5" width="1" height="1"/><rect x="7" y="5" width="1" height="1"/><rect x="8" y="5" width="1" height="1"/><rect x="9" y="5" width="1" height="1"/><rect x="10" y="5" width="1" height="1"/><rect x="11" y="5" width="1" height="1"/><rect x="12" y="5" width="1" height="1"/><rect x="2" y="6" width="1" height="1"/><rect x="3" y="6" width="1" height="1"/><rect x="4" y="6" width="1" height="1"/><rect x="5" y="6" width="1" height="1"/><rect x="6" y="6" width="1" height="1"/><rect x="7" y="6" width="1" height="1"/><rect x="8" y="6" width="1" height="1"/><rect x="9" y="6" width="1" height="1"/><rect x="10" y="6" width="1" height="1"/><rect x="11" y="6" width="1" height="1"/><rect x="12" y="6" width="1" height="1"/><rect x="1" y="7" width="1" height="1"/><rect x="2" y="7" width="1" height="1"/><rect x="3" y="7" width="1" height="1"/><rect x="4" y="7" width="1" height="1"/><rect x="5" y="7" width="1" height="1"/><rect x="6" y="7" width="1" height="1"/><rect x="7" y="7" width="1" height="1"/><rect x="8" y="7" width="1" height="1"/><rect x="9" y="7" width="1" height="1"/><rect x="10" y="7" width="1" height="1"/><rect x="11" y="7" width="1" height="1"/><rect x="12" y="7" width="1" height="1"/><rect x="13" y="7" width="1" height="1"/><rect x="14" y="7" width="1" height="1"/><rect x="2" y="8" width="1" height="1"/><rect x="3" y="8" width="1" height="1"/><rect x="4" y="8" width="1" height="1"/><rect x="5" y="8" width="1" height="1"/><rect x="6" y="8" width="1" height="1"/><rect x="7" y="8" width="1" height="1"/><rect x="8" y="8" width="1" height="1"/><rect x="9" y="8" width="1" height="1"/><rect x="10" y="8" width="1" height="1"/><rect x="11" y="8" width="1" height="1"/><rect x="12" y="8" width="1" height="1"/><rect x="2" y="9" width="1" height="1"/><rect x="3" y="9" width="1" height="1"/><rect x="4" y="9" width="1" height="1"/><rect x="5" y="9" width="1" height="1"/><rect x="6" y="9" width="1" height="1"/><rect x="7" y="9" width="1" height="1"/><rect x="8" y="9" width="1" height="1"/><rect x="9" y="9" width="1" height="1"/><rect x="10" y="9" width="1" height="1"/><rect x="11" y="9" width="1" height="1"/><rect x="12" y="9" width="1" height="1"/><rect x="1" y="10" width="1" height="1"/><rect x="2" y="10" width="1" height="1"/><rect x="3" y="10" width="1" height="1"/><rect x="4" y="10" width="1" height="1"/><rect x="5" y="10" width="1" height="1"/><rect x="6" y="10" width="1" height="1"/><rect x="7" y="10" width="1" height="1"/><rect x="8" y="10" width="1" height="1"/><rect x="9" y="10" width="1" height="1"/><rect x="10" y="10" width="1" height="1"/><rect x="11" y="10" width="1" height="1"/><rect x="12" y="10" width="1" height="1"/><rect x="13" y="10" width="1" height="1"/><rect x="3" y="11" width="1" height="1"/><rect x="4" y="11" width="1" height="1"/><rect x="5" y="11" width="1" height="1"/><rect x="6" y="11" width="1" height="1"/><rect x="7" y="11" width="1" height="1"/><rect x="8" y="11" width="1" height="1"/><rect x="9" y="11" width="1" height="1"/><rect x="10" y="11" width="1" height="1"/><rect x="12" y="11" width="1" height="1"/><rect x="13" y="11" width="1" height="1"/><rect x="3" y="12" width="1" height="1"/><rect x="4" y="12" width="1" height="1"/><rect x="5" y="12" width="1" height="1"/><rect x="7" y="12" width="1" height="1"/><rect x="8" y="12" width="1" height="1"/><rect x="10" y="12" width="1" height="1"/><rect x="11" y="12" width="1" height="1"/><rect x="7" y="13" width="1" height="1"/><rect x="8" y="13" width="1" height="1"/><rect x="10" y="13" width="1" height="1"/></g></svg>
<div class="tt" style="left:30px">WN2</div>
<div class="tt" style="left:65px;transform:scaleX(0.93);transform-origin:0 0">Passverzahnung DIN 5480:2006</div>
<div class="tt" style="left:231px">-</div>
<div class="tt" style="left:244px;transform:scaleX(0.915);transform-origin:0 0">TEST.wn2</div>
<svg style="position:absolute;left:1150px;top:0" width="132" height="31" viewBox="0 0 132 31">
<rect x="12" y="15" width="10" height="1" fill="#000"/>
<rect x="57.5" y="10.5" width="9" height="9" fill="none" stroke="#000" stroke-width="1"/>
<path d="M103.5 10.5 L112.5 19.5 M112.5 10.5 L103.5 19.5" stroke="#000" stroke-width="1.1"/>
</svg>
<div class="mi" style="left:8px"><u>D</u>atei</div>
<div class="mi" style="left:48px"><u>B</u>earbeiten</div>
<div class="mi" style="left:119px"><u>A</u>nsicht</div>
<div class="mi" style="left:173px"><u>C</u>AD</div>
<div class="mi" style="left:210px"><u>S</u>TL</div>
<div class="mi" style="left:244px">Datenban<u>k</u></div>
<div class="mi" style="left:315px">D<u>o</u>kument</div>
<div class="mi" style="left:385px">O<u>L</u>E</div>
<div class="mi" style="left:420px"><u>H</u>ilfe</div>
<div id="border"></div>
</body></html>
